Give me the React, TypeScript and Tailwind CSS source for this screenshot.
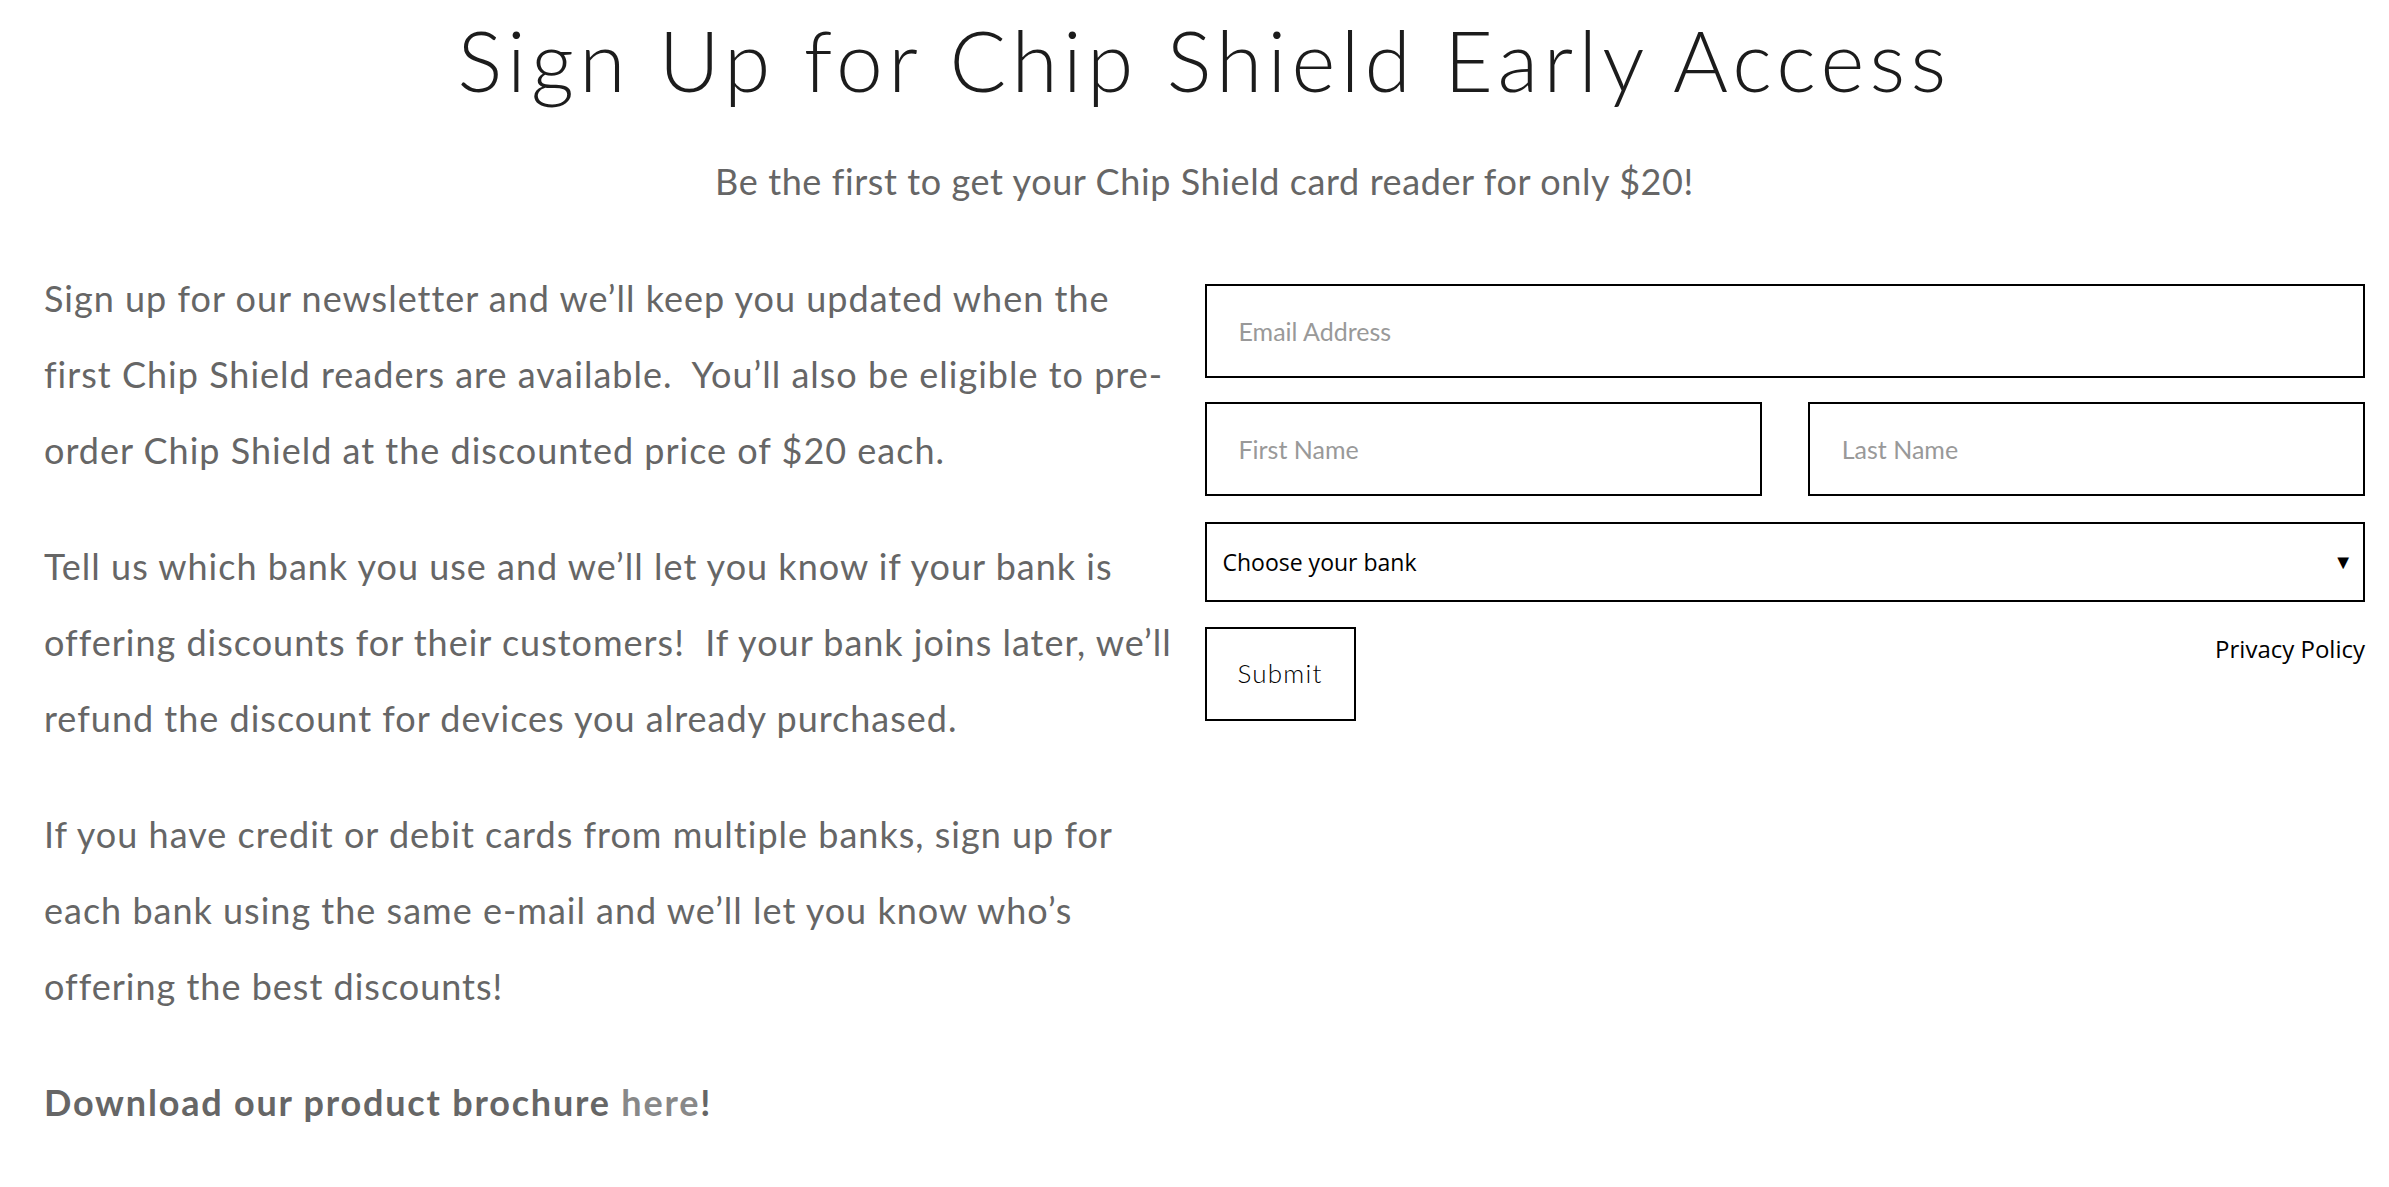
import React from "react";

const body = "font-['Lato','Liberation_Sans',sans-serif]";

function Lines({ lines }: { lines: string[] }) {
  return (
    <p className="mb-[40px] text-[36px] leading-[76px] tracking-[1px] text-[#666666]">
      {lines.map((l, i) => (
        <span key={i} className="block whitespace-pre">
          {l}
        </span>
      ))}
    </p>
  );
}

export default function App() {
  return (
    <div className={`min-h-screen bg-white pl-[44px] pr-[24px] ${body}`}>
      <h1 className="pt-[10px] text-center text-[84px] font-light leading-[1.2] tracking-[5.3px] text-[#1c1c1c]">
        Sign Up for Chip Shield Early Access
      </h1>
      <p className="mt-[49px] text-center text-[36px] leading-[1.2] tracking-[0.6px] text-[#666666]">
        Be the first to get your Chip Shield card reader for only $20!
      </p>
      <div className="mt-[57px] grid grid-cols-2">
        <div>
          <Lines
            lines={[
              "Sign up for our newsletter and we\u2019ll keep you updated when the",
              "first Chip Shield readers are available.  You\u2019ll also be eligible to pre-",
              "order Chip Shield at the discounted price of $20 each.",
            ]}
          />
          <Lines
            lines={[
              "Tell us which bank you use and we\u2019ll let you know if your bank is",
              "offering discounts for their customers!  If your bank joins later, we\u2019ll",
              "refund the discount for devices you already purchased.",
            ]}
          />
          <Lines
            lines={[
              "If you have credit or debit cards from multiple banks, sign up for",
              "each bank using the same e-mail and we\u2019ll let you know who\u2019s",
              "offering the best discounts!",
            ]}
          />
          <p className="text-[36px] font-bold leading-[76px] tracking-[1.8px] text-[#666666]">
            Download our product brochure <span className="text-[#888888]">here</span>!
          </p>
        </div>
        <div className="pt-[24px]">
          <input
            type="text"
            placeholder="Email Address"
            className="block h-[94px] w-full border-2 border-black bg-white px-[32px] text-[25px] text-[#333] outline-none placeholder:text-[#999999]"
          />
          <div className="mt-[24px] flex gap-[46px]">
            <input
              type="text"
              placeholder="First Name"
              className="block h-[94px] min-w-0 flex-1 border-2 border-black bg-white px-[32px] text-[25px] text-[#333] outline-none placeholder:text-[#999999]"
            />
            <input
              type="text"
              placeholder="Last Name"
              className="block h-[94px] min-w-0 flex-1 border-2 border-black bg-white px-[32px] text-[25px] text-[#333] outline-none placeholder:text-[#999999]"
            />
          </div>
          <div className="mt-[26px] flex h-[80px] items-center justify-between border-2 border-black pl-[16px] pr-[10px] font-['Open_Sans',sans-serif] text-[23px] text-black">
            <span>Choose your bank</span>
            <span className="text-[20px] leading-none">▼</span>
          </div>
          <div className="mt-[25px] flex items-start justify-between">
            <button className="h-[94px] w-[151px] border-2 border-black bg-white text-[26px] font-light tracking-[1.2px] text-black">
              Submit
            </button>
            <span className="mt-[4px] font-['Open_Sans',sans-serif] text-[24px] text-black">
              Privacy Policy
            </span>
          </div>
        </div>
      </div>
    </div>
  );
}
